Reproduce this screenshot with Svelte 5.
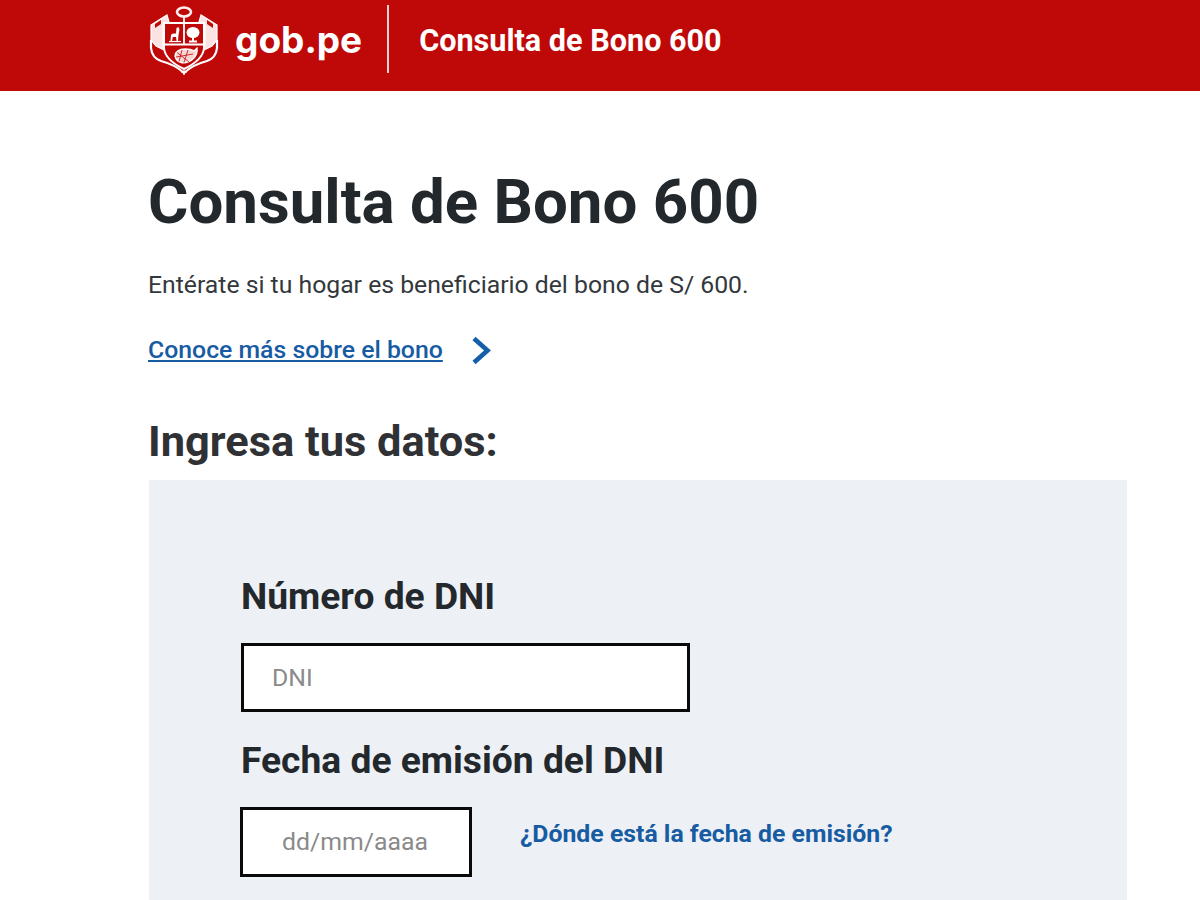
<script>
  const title = 'Consulta de Bono 600';
</script>

<header class="top">
  <div class="brand">
    <svg class="crest" viewBox="0 0 76 74" width="76" height="74" fill="none" stroke="#fff" aria-hidden="true">
      <ellipse cx="38" cy="10" rx="7" ry="4.500" stroke-width="2.600" stroke="#ffeeee" />
      <path d="M38 15 V22" stroke-width="1.800" />
      <path d="M5 23 L21 13 L23 20 L17 24 V44 L22 50 L10 44 L5 38 Z" fill="#fbe3e3" stroke-width="1.200" />
      <path d="M71 23 L55 13 L53 20 L59 24 V44 L54 50 L66 44 L71 38 Z" fill="#fbe3e3" stroke-width="1.200" />
      <path d="M9 22 L15 18 V22 L9 26 Z M61 18 L67 22 V26 L61 22 Z" fill="#bf0909" stroke="none" />
      <path d="M5 38 V46 Q6 56 15 59 Q30 63 38 71 Q46 63 61 59 Q70 56 71 46 V38" stroke-width="2.200" />
      <path d="M18 21 H58 V46 Q57 58 38 67 Q19 58 18 46 Z" fill="#bf0909" stroke-width="2" />
      <path d="M18 42.500 H58 M38 21 V42.500" stroke-width="1.800" />
      <path d="M24.500 39 L25 33 Q25.500 31.500 27.500 31.500 H30 L30.500 26 L32.500 25 L33.500 27.500 L32.500 33 L32 39 H30.600 L30 35 H26.800 L26 39 Z" fill="#fff" stroke="none" />
      <path d="M23 39.500 H35" stroke-width="1.200" />
      <ellipse cx="47" cy="30.500" rx="6.500" ry="5.500" fill="#fff" stroke="none" />
      <path d="M47 33 V39.500 M43 39.500 H51" stroke-width="2" />
      <path d="M29 54 Q30 47 39 47 Q45 47 48 49 L51 46 Q52 52 47 57 Q41 62 35 60.500 Q30 59 29 54 Z" fill="#f8d5d5" stroke-width="1.300" />
      <path d="M31 50.500 L43 60 M36 48 L33 59.500 M42 48 L38 60.500 M30 55 L47 52" stroke="#bf0909" stroke-width=".8" />
      <path d="M38 67 V73 M35 70 H41" stroke-width="1.200" />
    </svg>
    <span class="word">gob.pe</span>
    <span class="rule"></span>
    <span class="service">{title}</span>
  </div>
</header>

<main class="page">
  <h1>{title}</h1>
  <p class="lead">Entérate si tu hogar es beneficiario del bono de S/ 600.</p>
  <div class="more">
    <a href="#bono">Conoce más sobre el bono</a>
    <svg width="21" height="29" viewBox="0 0 21 29" fill="none" aria-hidden="true">
      <path d="M3 2.500 L16.500 14.500 L3 26.500" stroke="#1460a8" stroke-width="4.600" />
    </svg>
  </div>
  <h2>Ingresa tus datos:</h2>
  <form class="panel">
    <label for="dni">Número de DNI</label>
    <input id="dni" class="dni" placeholder="DNI" />
    <label for="fecha" class="second">Fecha de emisión del DNI</label>
    <div class="row">
      <input id="fecha" class="date" placeholder="dd/mm/aaaa" />
      <a class="where" href="#fecha">¿Dónde está la fecha de emisión?</a>
    </div>
  </form>
</main>

<style>
  :global(body) {
    margin: 0;
    background: #fff;
    height: 900px;
    overflow: hidden;
    font-family: Roboto, "Liberation Sans", sans-serif;
    color: #23282d;
  }
  .top {
    height: 91px;
    background: #bf0909;
    box-sizing: border-box;
    padding-left: 146px;
  }
  .brand {
    display: flex;
    align-items: center;
    height: 78px;
  }
  .word {
    margin-left: 13px;
    font: 700 37px/1 Inter, Roboto, sans-serif;
    color: #fff;
  }
  .rule {
    width: 2px;
    height: 68px;
    margin: 0 30px 0 25px;
    background: #f3d0d0;
  }
  .service {
    margin-top: 2px;
    font-size: 30.600px;
    font-weight: 700;
    color: #fff;
  }
  .page {
    padding: 78px 73px 0 148px;
  }
  h1 {
    margin: 0;
    font-size: 61.800px;
    line-height: 66px;
    font-weight: 700;
  }
  .lead {
    margin: 34px 0 0;
    font-size: 24.750px;
    line-height: 32px;
    color: #33383c;
  }
  .more {
    display: flex;
    align-items: center;
    gap: 28px;
    margin-top: 32px;
    height: 32px;
  }
  .more a {
    font-size: 24.800px;
    font-weight: 500;
    color: #175ca3;
  }
  .more svg {
    margin-top: 3px;
  }
  h2 {
    margin: 52px 0 0;
    font-size: 43.400px;
    line-height: 50px;
    font-weight: 700;
    color: #2f3135;
  }
  .panel {
    margin: 13px 0 0 1px;
    padding: 96px 92px 60px;
    background: #edf0f4;
    display: flex;
    flex-direction: column;
    align-items: flex-start;
    height: 600px;
    box-sizing: border-box;
  }
  label {
    font-size: 37.200px;
    line-height: 40px;
    font-weight: 700;
    color: #23282d;
  }
  input {
    box-sizing: border-box;
    border: 3px solid #0a0a0a;
    background: #fff;
    height: 70px;
    font: 400 24.800px Roboto, sans-serif;
    outline: none;
    border-radius: 0;
  }
  input::placeholder {
    color: #8a8a8a;
    opacity: 1;
  }
  .dni {
    width: 449px;
    height: 69px;
    margin-top: 27px;
    padding-left: 28px;
  }
  .second {
    margin-top: 28px;
  }
  .row {
    display: flex;
    margin-top: 27px;
    margin-left: -1px;
  }
  .date {
    width: 232px;
    text-align: center;
    padding: 0 2px 2px 0;
  }
  .where {
    margin: 11px 0 0 48px;
    font-size: 24.800px;
    line-height: 32px;
    font-weight: 700;
    color: #175ca3;
    text-decoration: none;
  }
</style>
